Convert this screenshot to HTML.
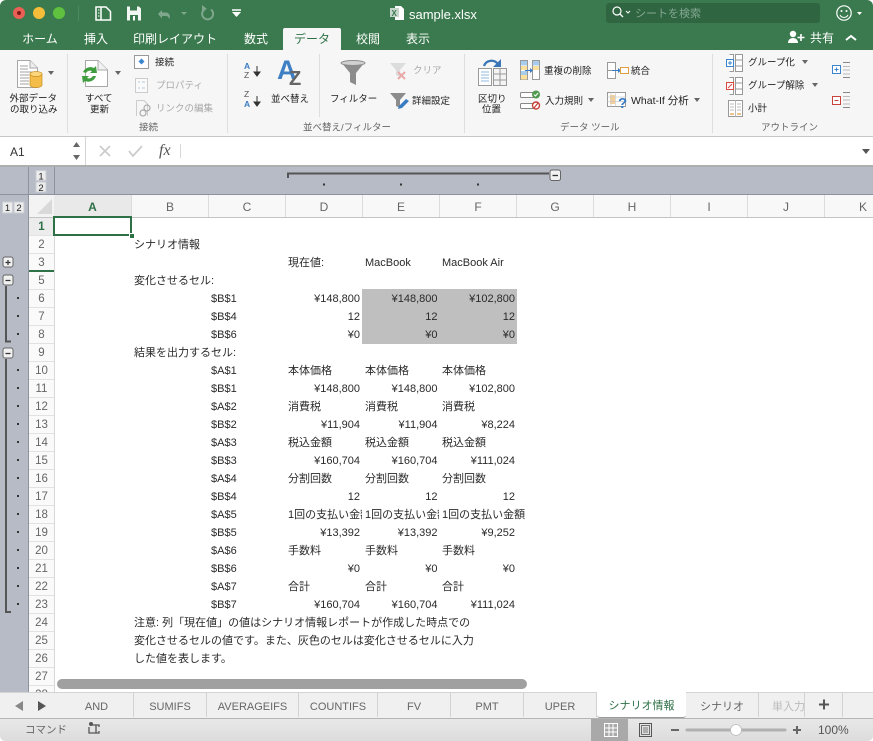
<!DOCTYPE html>
<html lang="ja"><head><meta charset="utf-8"><title>sample.xlsx</title>
<style>
html,body{margin:0;padding:0;background:#fff}
#w{position:relative;width:873px;height:741px;overflow:hidden;background:#fff;font-family:"Liberation Sans","Noto Sans CJK JP",sans-serif;font-size:11px;color:#2a2a2a}
#w>div,.a{position:absolute}
svg{position:absolute;left:0;top:0}
svg text{font-family:"Liberation Sans","Noto Sans CJK JP",sans-serif}
.r{position:absolute;left:0;width:873px;height:18px;line-height:20px;white-space:nowrap}
.r b{font-weight:400;position:absolute;top:0;overflow:hidden}
.B{left:134px}.C{left:211px}.D{left:288px;width:74px}.E{left:365px;width:74px}.F{left:442px}
.dr{left:285px;width:75px;text-align:right}.er{left:362px;width:75.5px;text-align:right}.fr{left:440px;width:75px;text-align:right}
.n{position:absolute;left:29px;width:25px;height:17px;line-height:19px;text-align:center;color:#666;font-size:11.5px;background:#fafafa;border-bottom:1px solid #e2e2e2}
.h{position:absolute;top:195px;height:22px;line-height:25px;text-align:center;color:#666;font-size:12px;background:#f8f8f8;border-right:1px solid #dcdcdc}
.tb{position:absolute;top:692px;height:26px;line-height:28px;text-align:center;color:#666;font-size:11px;border-right:1px solid #d2d2d2;box-sizing:border-box}
.rt{position:absolute;top:28px;height:22px;line-height:23px;color:#fff;font-size:12px;text-align:center}
</style></head><body><div id="w">

<div style="left:0;top:0;width:873px;height:50px;background:#3a7a4e;border-radius:6px 6px 0 0"></div>
<div style="left:606px;top:3px;width:214px;height:20px;background:#2f6541;border-radius:3px"></div>
<div style="left:283px;top:28px;width:58px;height:22px;background:#f6f6f6;border-radius:2px 2px 0 0"></div>
<div class="rt" style="left:14px;width:52px">ホーム</div>
<div class="rt" style="left:76px;width:40px">挿入</div>
<div class="rt" style="left:130px;width:90px">印刷レイアウト</div>
<div class="rt" style="left:236px;width:40px">数式</div>
<div class="rt" style="left:283px;width:58px;color:#2e7147">データ</div>
<div class="rt" style="left:348px;width:40px">校閲</div>
<div class="rt" style="left:398px;width:40px">表示</div>
<div style="left:409px;top:6px;height:18px;line-height:18px;color:#fff;font-size:13px">sample.xlsx</div>
<div style="left:635px;top:4px;height:20px;line-height:20px;color:#84a892;font-size:11px">シートを検索</div>
<div style="left:810px;top:29px;height:18px;line-height:19px;color:#fff;font-size:12px">共有</div>

<div style="left:0;top:50px;width:873px;height:86px;background:#f6f6f6;border-bottom:1px solid #c6c6c6"></div>

<!-- formula bar -->
<div style="left:0;top:137px;width:873px;height:28px;background:#fff;border-bottom:2px solid #aeaeae"></div>
<div style="left:85px;top:137px;width:1px;height:28px;background:#d4d4d4"></div>
<div style="left:180px;top:144px;width:1px;height:14px;background:#d8d8d8"></div>
<div style="left:10px;top:143px;height:18px;line-height:18px;font-size:12px;color:#333">A1</div>
<div style="left:159px;top:142px;height:20px;line-height:20px;font:italic 400 16px 'Liberation Serif',serif;color:#555">fx</div>

<!-- outline bars -->
<div style="left:0;top:167px;width:873px;height:28px;background:#b7bbc6;border-bottom:1px solid #8e929c;box-sizing:border-box"></div>
<div style="left:0;top:195px;width:29px;height:498px;background:#b7bbc6"></div>
<div style="left:29px;top:195px;width:25px;height:22px;background:#f3f3f3"></div>
<div style="left:28px;top:167px;width:1px;height:526px;background:#8e929c"></div>
<div style="left:54px;top:167px;width:1px;height:28px;background:#8e929c"></div>

<!-- column headers -->
<div class="h" style="left:54px;width:77px;color:#2e7147;font-weight:700;background:#e9e9e9">A</div>
<div class="h" style="left:132px;width:76px">B</div>
<div class="h" style="left:209px;width:76px">C</div>
<div class="h" style="left:286px;width:76px">D</div>
<div class="h" style="left:363px;width:76px">E</div>
<div class="h" style="left:440px;width:76px">F</div>
<div class="h" style="left:517px;width:76px">G</div>
<div class="h" style="left:594px;width:76px">H</div>
<div class="h" style="left:671px;width:76px">I</div>
<div class="h" style="left:748px;width:76px">J</div>
<div class="h" style="left:825px;width:76px">K</div>
<div style="left:29px;top:217px;width:844px;height:1px;background:#c4c4c4"></div>

<!-- row numbers -->
<div class="n" style="top:218px;color:#2e7147;font-weight:700;background:#ececec">1</div>
<div class="n" style="top:236px">2</div><div class="n" style="top:254px">3</div>
<div class="n" style="top:272px">5</div><div class="n" style="top:290px">6</div>
<div class="n" style="top:308px">7</div><div class="n" style="top:326px">8</div>
<div class="n" style="top:344px">9</div><div class="n" style="top:362px">10</div>
<div class="n" style="top:380px">11</div><div class="n" style="top:398px">12</div>
<div class="n" style="top:416px">13</div><div class="n" style="top:434px">14</div>
<div class="n" style="top:452px">15</div><div class="n" style="top:470px">16</div>
<div class="n" style="top:488px">17</div><div class="n" style="top:506px">18</div>
<div class="n" style="top:524px">19</div><div class="n" style="top:542px">20</div>
<div class="n" style="top:560px">21</div><div class="n" style="top:578px">22</div>
<div class="n" style="top:596px">23</div><div class="n" style="top:614px">24</div>
<div class="n" style="top:632px">25</div><div class="n" style="top:650px">26</div>
<div class="n" style="top:668px">27</div><div class="n" style="top:686px">28</div>
<div style="left:29px;top:270px;width:25px;height:2px;background:#2e7147"></div>
<div style="left:54px;top:218px;width:1px;height:475px;background:#d8d8d8"></div>

<!-- grey fill -->
<div style="left:362px;top:289px;width:155px;height:55px;background:#bfbfbf"></div>

<!-- cells -->
<div class="r" style="top:235px"><b class="B">シナリオ情報</b></div>
<div class="r" style="top:253px"><b class="D">現在値:</b><b class="E">MacBook</b><b class="F">MacBook Air</b></div>
<div class="r" style="top:271px"><b class="B">変化させるセル:</b></div>
<div class="r" style="top:289px"><b class="C">$B$1</b><b class="dr">¥148,800</b><b class="er">¥148,800</b><b class="fr">¥102,800</b></div>
<div class="r" style="top:307px"><b class="C">$B$4</b><b class="dr">12</b><b class="er">12</b><b class="fr">12</b></div>
<div class="r" style="top:325px"><b class="C">$B$6</b><b class="dr">¥0</b><b class="er">¥0</b><b class="fr">¥0</b></div>
<div class="r" style="top:343px"><b class="B">結果を出力するセル:</b></div>
<div class="r" style="top:361px"><b class="C">$A$1</b><b class="D">本体価格</b><b class="E">本体価格</b><b class="F">本体価格</b></div>
<div class="r" style="top:379px"><b class="C">$B$1</b><b class="dr">¥148,800</b><b class="er">¥148,800</b><b class="fr">¥102,800</b></div>
<div class="r" style="top:397px"><b class="C">$A$2</b><b class="D">消費税</b><b class="E">消費税</b><b class="F">消費税</b></div>
<div class="r" style="top:415px"><b class="C">$B$2</b><b class="dr">¥11,904</b><b class="er">¥11,904</b><b class="fr">¥8,224</b></div>
<div class="r" style="top:433px"><b class="C">$A$3</b><b class="D">税込金額</b><b class="E">税込金額</b><b class="F">税込金額</b></div>
<div class="r" style="top:451px"><b class="C">$B$3</b><b class="dr">¥160,704</b><b class="er">¥160,704</b><b class="fr">¥111,024</b></div>
<div class="r" style="top:469px"><b class="C">$A$4</b><b class="D">分割回数</b><b class="E">分割回数</b><b class="F">分割回数</b></div>
<div class="r" style="top:487px"><b class="C">$B$4</b><b class="dr">12</b><b class="er">12</b><b class="fr">12</b></div>
<div class="r" style="top:505px"><b class="C">$A$5</b><b class="D">1回の支払い金額</b><b class="E">1回の支払い金額</b><b class="F">1回の支払い金額</b></div>
<div class="r" style="top:523px"><b class="C">$B$5</b><b class="dr">¥13,392</b><b class="er">¥13,392</b><b class="fr">¥9,252</b></div>
<div class="r" style="top:541px"><b class="C">$A$6</b><b class="D">手数料</b><b class="E">手数料</b><b class="F">手数料</b></div>
<div class="r" style="top:559px"><b class="C">$B$6</b><b class="dr">¥0</b><b class="er">¥0</b><b class="fr">¥0</b></div>
<div class="r" style="top:577px"><b class="C">$A$7</b><b class="D">合計</b><b class="E">合計</b><b class="F">合計</b></div>
<div class="r" style="top:595px"><b class="C">$B$7</b><b class="dr">¥160,704</b><b class="er">¥160,704</b><b class="fr">¥111,024</b></div>
<div class="r" style="top:613px"><b class="B">注意: 列「現在値」の値はシナリオ情報レポートが作成した時点での</b></div>
<div class="r" style="top:631px"><b class="B">変化させるセルの値です。また、灰色のセルは変化させるセルに入力</b></div>
<div class="r" style="top:649px"><b class="B">した値を表します。</b></div>

<!-- selection -->
<div style="left:53px;top:216px;width:79px;height:20px;border:2px solid #2e7147;box-sizing:border-box"></div>
<div style="left:129px;top:233px;width:6px;height:6px;background:#2e7147;border:1px solid #fff;box-sizing:border-box"></div>

<!-- scrollbar -->
<div style="left:57px;top:679px;width:470px;height:10px;background:#a0a0a0;border-radius:5px"></div>

<!-- tabs -->
<div style="left:0;top:692px;width:873px;height:27px;background:#f0f0f0;border-top:1px solid #d4d4d4;border-bottom:1px solid #b4b4b4;box-sizing:border-box"></div>
<div class="tb" style="left:60px;width:74px;top:693px;height:24px">AND</div>
<div class="tb" style="left:134px;width:73px;top:693px;height:24px">SUMIFS</div>
<div class="tb" style="left:207px;width:92px;top:693px;height:24px">AVERAGEIFS</div>
<div class="tb" style="left:299px;width:79px;top:693px;height:24px">COUNTIFS</div>
<div class="tb" style="left:378px;width:73px;top:693px;height:24px">FV</div>
<div class="tb" style="left:451px;width:73px;top:693px;height:24px">PMT</div>
<div class="tb" style="left:524px;width:73px;top:693px;height:24px">UPER</div>
<div class="tb" style="left:597px;width:89px;top:692px;height:26px;background:#fff;color:#2e7147;border:0;border-bottom:1px solid #999;border-radius:0 0 3px 3px;line-height:28px">シナリオ情報</div>
<div class="tb" style="left:686px;width:73px;top:693px;height:24px">シナリオ</div>
<div class="tb" style="left:759px;width:46px;top:693px;height:24px;color:#bbb;overflow:hidden;text-align:left;padding-left:13px;white-space:nowrap">単入力</div>
<div class="tb" style="left:805px;width:38px;top:693px;height:24px"></div>

<!-- status -->
<div style="left:0;top:719px;width:873px;height:22px;background:linear-gradient(#e8e8e8,#dcdcdc);border-radius:0 0 5px 5px"></div>
<div style="left:25px;top:720px;height:21px;line-height:21px;font-size:10.5px;color:#666">コマンド</div>
<div style="left:591px;top:719px;width:37px;height:22px;background:#a9a9a9"></div>
<div style="left:818px;top:720px;height:21px;line-height:21px;font-size:12px;color:#555">100%</div>

<svg width="873" height="741" viewBox="0 0 873 741">
<!-- traffic lights -->
<circle cx="19" cy="13" r="6" fill="#ec5f56"/><circle cx="19" cy="13" r="2" fill="#7c1a14"/>
<circle cx="39" cy="13" r="6" fill="#f5bd3a"/><circle cx="59" cy="13" r="6" fill="#5fc13f"/>
<path d="M78.500 6V21" stroke="#4c8a60"/>
<!-- sidebar/file -->
<path d="M96 7H106L110.500 11.500V20H96Z M101 7V20" fill="none" stroke="#fff" stroke-width="1.500"/>
<path d="M98 10h1.500M98 13h1.500M98 16h1.500" stroke="#fff"/>
<!-- save -->
<path d="M127 6.500H139L141 8.500V20.500H127Z" fill="#f3f7f4"/><rect x="130" y="6.500" width="7" height="4" fill="#3a7a4e"/><rect x="130" y="15" width="8" height="5.500" fill="#3a7a4e"/><rect x="133" y="16" width="2" height="4.500" fill="#fff"/>
<!-- undo -->
<path d="M158 14l4-4v2.500h4a4 4 0 0 1 3 6.500a3 3 0 0 0-3-3h-4v2.500z" fill="#7fa78d"/><path d="M181 12l3 3 3-3z" fill="#7fa78d"/>
<path d="M211 9.500a5.500 5.500 0 1 1-6-.5" fill="none" stroke="#7fa78d" stroke-width="2"/><path d="M202 5v6l5-2z" fill="#7fa78d"/>
<path d="M232 10h9" stroke="#fff" stroke-width="1.500"/><path d="M232 12h9l-4.500 5z" fill="#fff"/>
<!-- xlsx icon -->
<path d="M395 6h6l3 3v11h-9z" fill="#fff"/><rect x="390" y="8" width="9" height="9" fill="#c6d6cb"/><text x="391.500" y="16" font-size="8" font-weight="700" fill="#3a7a4e">X</text>
<!-- search -->
<circle cx="617" cy="11" r="4" fill="none" stroke="#fff" stroke-width="1.200"/><path d="M620 14l3 3" stroke="#fff" stroke-width="1.300"/><path d="M626 11l2 2 2-2" fill="none" stroke="#fff"/>
<!-- smile -->
<circle cx="844" cy="13" r="7.200" fill="none" stroke="#fff" stroke-width="1.200"/><circle cx="841.500" cy="11" r="1" fill="#fff"/><circle cx="846.500" cy="11" r="1" fill="#fff"/><path d="M840 15a4.500 4.500 0 0 0 8 0" fill="none" stroke="#fff"/>
<path d="M857 12h5l-2.500 3z" fill="#fff"/>
<!-- share -->
<circle cx="793" cy="34" r="3.200" fill="#fff"/><path d="M788 43c0-3 2-5 5-5s5 2 5 5z" fill="#fff"/><path d="M801 34v7M797.500 37.500h7" stroke="#fff" stroke-width="1.600"/>
<path d="M846 40l5-4 5 4" fill="none" stroke="#fff" stroke-width="2"/>

<!-- ribbon separators -->
<path d="M67.500 54V133M227.500 54V133M319.500 54V117M464.500 54V133M712.500 54V133" stroke="#dedede"/>

<!-- external data -->
<path d="M17.500 60.500H30L37.500 68V87.500H17.500Z" fill="#fff" stroke="#a8a8a8"/><path d="M30 60.500V68H37.500" fill="#eee" stroke="#a8a8a8"/>
<path d="M20 66h8M20 69h8M20 72h14M20 75h9M20 78h9M20 81h9M20 84h9" stroke="#a0a0a0"/>
<path d="M30 74v11a6 2.500 0 0 0 12 0v-11z" fill="#f4bd4a" stroke="#c78f1e" stroke-width=".7"/><ellipse cx="36" cy="74" rx="6" ry="2.500" fill="#fbd67c" stroke="#c78f1e" stroke-width=".7"/>
<path d="M48 71h6l-3 4z" fill="#666"/>
<!-- refresh -->
<path d="M85.500 60.500H98L107.500 70V86.500H85.500Z" fill="#fff" stroke="#a8a8a8"/><path d="M98 60.500V70H107.500" fill="#f2f2f2" stroke="#a8a8a8"/>
<path d="M83 72a8 8 0 0 1 11-4l2-2 1 7h-7l2-2a5 5 0 0 0-6 2z" fill="#3f9c3f"/><path d="M96 76a8 8 0 0 1-11 5l-2 2-1-7h7l-2 2a5 5 0 0 0 6-2z" fill="#3f9c3f"/>
<path d="M115 71h6l-3 4z" fill="#666"/>
<!-- connections -->
<rect x="134.500" y="55.500" width="14" height="13" fill="#fff" stroke="#999"/><path d="M141.500 58.500l3 3-3 3-3-3z" fill="#3a85d0"/>
<rect x="135.500" y="78.500" width="12" height="14" fill="#fafafa" stroke="#ccc"/><path d="M138 82h2M142 82h3M138 88h2M142 88h3" stroke="#b8c8d8"/>
<path d="M136.500 100.500H144L147.500 104V116" fill="none" stroke="#ccc"/><path d="M136.500 100.500V116" stroke="#ccc"/><circle cx="143" cy="113" r="3" fill="none" stroke="#aaa" stroke-width="1.200"/><circle cx="147" cy="108" r="3" fill="none" stroke="#aaa" stroke-width="1.200"/>
<!-- sort -->
<g font-size="8.500"><text x="244" y="69" fill="#3a7cc4" font-weight="700">A</text><text x="244" y="78" fill="#555">Z</text>
<text x="244" y="97" fill="#555">Z</text><text x="244" y="107" fill="#3a7cc4" font-weight="700">A</text></g>
<path d="M257 66v7M254 72l3 4 3-4z" stroke="#333" fill="#333"/><path d="M257 96v7M254 102l3 4 3-4z" stroke="#333" fill="#333"/>
<text x="277" y="79" font-size="27" font-weight="700" fill="#3f7fc4">A</text><text x="289" y="85" font-size="20" font-weight="700" fill="#666">Z</text>
<!-- funnel -->
<path d="M341 62h24l-9 11v12l-6-3v-9z" fill="#8c8c8c"/><ellipse cx="353" cy="63" rx="12" ry="2.500" fill="#d0d0d0" stroke="#8c8c8c"/>
<path d="M390 63h16l-6 7v7l-4-2v-5z" fill="#dcdcdc"/><path d="M398 72l7 7M405 72l-7 7" stroke="#e8aaa6" stroke-width="2"/>
<path d="M390 93h16l-6 7v8l-4-2v-6z" fill="#8c8c8c"/><path d="M399 106l7-7 3 2-7 7-4 1z" fill="#3a7cc4"/>
<!-- text to columns -->
<path d="M484 66c2-6 10-7 14-2" fill="none" stroke="#3a75b8" stroke-width="2.200"/><path d="M501 59v8h-8z" fill="#3a75b8"/>
<rect x="478.500" y="68.500" width="13" height="17" fill="#fff" stroke="#999"/><path d="M481 72h8M481 75h8M481 78h8M481 81h8" stroke="#8fb8dc"/>
<rect x="493.500" y="68.500" width="13" height="17" fill="#f4f4f4" stroke="#999"/><path d="M500 68.500V85.500M493.500 74h13M493.500 80h13" stroke="#999"/>
<!-- remove dup -->
<rect x="520.500" y="60.500" width="7" height="19" fill="#fff" stroke="#999"/><rect x="521" y="61" width="6" height="4.500" fill="#a8cdec"/><rect x="521" y="66" width="6" height="4" fill="#fbdf9c"/><rect x="521" y="71" width="6" height="4" fill="#a8cdec"/><rect x="521" y="75" width="6" height="4.500" fill="#fbdf9c"/>
<rect x="532.500" y="60.500" width="7" height="19" fill="#fff" stroke="#999"/><rect x="533" y="61" width="6" height="4.500" fill="#a8cdec"/><rect x="533" y="66" width="6" height="4" fill="#fbdf9c"/>
<path d="M525 70.500h6" stroke="#3a7cc4"/><path d="M530 68l3 2.500-3 2.500z" fill="#3a7cc4"/>
<!-- consolidate -->
<rect x="607.500" y="62.500" width="8" height="16" fill="#fff" stroke="#999"/><path d="M607.500 70.500h8" stroke="#999"/><path d="M612 70.500h7" stroke="#3a7cc4"/><path d="M618 68l3 2.500-3 2.500z" fill="#3a7cc4"/><rect x="620.500" y="67.500" width="8" height="6" fill="#fff" stroke="#e0a040"/>
<!-- validation -->
<rect x="520.500" y="92.500" width="15" height="5" rx="1" fill="#fff" stroke="#888"/><rect x="520.500" y="103.500" width="15" height="5" rx="1" fill="#fff" stroke="#888"/>
<circle cx="536" cy="94.500" r="4" fill="#4f9a4f"/><path d="M534 94.500l1.500 1.500 2.500-3" fill="none" stroke="#fff"/>
<circle cx="536" cy="105.500" r="3.500" fill="#fff" stroke="#c8413a" stroke-width="1.400"/><path d="M534 108l4-5" stroke="#c8413a" stroke-width="1.200"/>
<!-- what-if -->
<rect x="607.500" y="92.500" width="18" height="14" fill="#fff" stroke="#999"/><rect x="610" y="95" width="5" height="9" fill="#f5cf94"/><path d="M607.500 97h18M607.500 101.500h18M611 92.500v14M615.500 92.500v14" stroke="#ccc" stroke-width=".7"/>
<text x="618" y="108" font-size="15" font-weight="700" fill="#3a7cc4">?</text>
<!-- group -->
<path d="M729.500 54.500h4v17h-4M735.500 54.500h7v17h-7ZM735.500 60h7M735.500 66h7" fill="#fff" stroke="#999"/><rect x="726.500" y="59.500" width="7" height="7" fill="#fff" stroke="#3a85d0"/><path d="M728 63h4M730 61v4" stroke="#3a85d0"/>
<path d="M729.500 77.500h4v17h-4M735.500 77.500h7v17h-7ZM735.500 83h7M735.500 89h7" fill="#fff" stroke="#999"/><rect x="726.500" y="82.500" width="7" height="7" fill="#fff" stroke="#d8493f"/><path d="M728 88l4-4" stroke="#d8493f"/>
<rect x="728.500" y="100.500" width="14" height="16" fill="#fff" stroke="#999"/><path d="M735.500 100.500v16M730 104h4M730 107h4M730 110h4M737 104h4M737 107h4M737 110h4" stroke="#bbb"/><path d="M730 114h4M737 114h4" stroke="#e0a040" stroke-width="1.300"/>
<!-- show/hide detail -->
<rect x="832.500" y="65.500" width="8" height="8" fill="#fff" stroke="#3a85d0"/><path d="M834.500 69.500h4M836.500 67.500v4" stroke="#3a85d0"/>
<path d="M843 62.500h7M843 77.500h7" stroke="#888"/><path d="M843 66.500h7M843 70h7M843 74h7" stroke="#bbb"/>
<rect x="832.500" y="96.500" width="8" height="8" fill="#fff" stroke="#c8413a"/><path d="M834.500 100.500h4" stroke="#c8413a"/>
<path d="M843 92.500h7M843 107.500h7" stroke="#888"/><path d="M843 96.500h7M843 100h7M843 104h7" stroke="#bbb"/>
<!-- dropdown arrows -->
<path d="M588 98h6l-3 4zM694 98h6l-3 4zM802 60h6l-3 4zM812 83h6l-3 4z" fill="#666"/>

<g font-size="9.500" fill="#222">
<text x="9.500" y="101.500">外部データ</text><text x="10" y="112.500">の取り込み</text>
<text x="85" y="101.500">すべて</text><text x="90" y="112.500">更新</text>
<text x="155" y="65.500">接続</text>
<text x="271" y="102">並べ替え</text>
<text x="330" y="102">フィルター</text>
<text x="412" y="104">詳細設定</text>
<text x="478" y="102">区切り</text><text x="482" y="112.500">位置</text>
<text x="544" y="74">重複の削除</text><text x="631" y="74">統合</text>
<text x="545" y="104">入力規則</text><text x="631" y="104" font-size="10.500">What-If 分析</text>
<text x="748" y="65.500">グループ化</text><text x="748" y="88.500">グループ解除</text><text x="748" y="111.500">小計</text>
</g>
<g font-size="9.500" fill="#aaa">
<text x="156" y="88.500">プロパティ</text><text x="156" y="111.500">リンクの編集</text><text x="413" y="73.500">クリア</text>
</g>
<g font-size="9.500" fill="#666">
<text x="139" y="130.500">接続</text><text x="303" y="130.500">並べ替え/フィルター</text><text x="560" y="130.500">データ ツール</text><text x="761" y="130.500">アウトライン</text>
</g>

<!-- formula bar icons -->
<path d="M73 147l3.500-5 3.500 5z" fill="#666"/><path d="M73 155l3.500 5 3.500-5z" fill="#666"/>
<path d="M100 146l10 10M110 146l-10 10" stroke="#ccc" stroke-width="1.800"/>
<path d="M129 151l4 5 9-10" fill="none" stroke="#ccc" stroke-width="1.800"/>
<path d="M862 149h8l-4 5z" fill="#555"/>

<!-- outline level buttons -->
<g fill="#ececec" stroke="#c9ccd4"><rect x="36" y="170.500" width="10" height="10"/><rect x="36" y="182" width="10" height="10"/><rect x="2.500" y="202" width="10" height="11"/><rect x="14" y="202" width="10" height="11"/></g>
<g font-size="9.500" fill="#222" text-anchor="middle"><text x="41" y="179.500">1</text><text x="41" y="191">2</text><text x="7.500" y="211">1</text><text x="19" y="211">2</text></g>
<path d="M52 199V214H37Z" fill="#d9d9d9"/>

<!-- column outline -->
<path d="M288 178V173.500H549" fill="none" stroke="#555" stroke-width="2"/>
<rect x="550" y="170" width="10.500" height="10.500" rx="2" fill="#f1f1f1" stroke="#666"/><path d="M552.500 175.500h5.500" stroke="#333" stroke-width="1.300"/>
<path d="M323 183.500h2v2h-2zM400 183.500h2v2h-2zM477 183.500h2v2h-2z" fill="#333"/>

<!-- row outline -->
<g fill="#f1f1f1" stroke="#666"><rect x="3" y="257" width="10" height="10" rx="2"/><rect x="3" y="275" width="10" height="10" rx="2"/><rect x="3" y="348" width="10" height="10" rx="2"/></g>
<path d="M5.500 262.500h5M8 260v5M5.500 280.500h5M5.500 353.500h5" stroke="#333" stroke-width="1.200"/>
<path d="M6 286V341.500H11M6 359V612H11" fill="none" stroke="#555" stroke-width="2"/>
<path d="M17 297h2v2h-2zM17 315h2v2h-2zM17 333h2v2h-2zM17 369h2v2h-2zM17 387h2v2h-2zM17 405h2v2h-2zM17 423h2v2h-2zM17 441h2v2h-2zM17 459h2v2h-2zM17 477h2v2h-2zM17 495h2v2h-2zM17 513h2v2h-2zM17 531h2v2h-2zM17 549h2v2h-2zM17 567h2v2h-2zM17 585h2v2h-2zM17 603h2v2h-2z" fill="#333"/>

<!-- tab arrows -->
<path d="M23 701v10l-8-5z" fill="#888"/><path d="M38 701v10l8-5z" fill="#555"/>
<path d="M819 704.500h10M824 699.500v10" stroke="#555" stroke-width="2"/>

<!-- status icons -->
<circle cx="91" cy="724" r="2" fill="#555"/><path d="M89 727v6h10v-2M91 725h8v2M96 725v8" fill="none" stroke="#555" stroke-width="1.300"/>
<path d="M604.500 723.500h13v13h-13zM604.500 728h13M604.500 732h13M609 723.500v13M613 723.500v13" fill="none" stroke="#fff"/>
<rect x="639.500" y="723.500" width="12" height="13" fill="none" stroke="#555"/><rect x="641.500" y="725.500" width="8" height="9" fill="none" stroke="#555" stroke-width=".8"/><path d="M643 728h5M643 730h5M643 732h5" stroke="#555" stroke-width=".7"/>
<path d="M671 730h8" stroke="#666" stroke-width="2"/>
<path d="M687 730H785" stroke="#b0b0b0" stroke-width="3" stroke-linecap="round"/>
<circle cx="736" cy="730" r="5.500" fill="#fff" stroke="#bbb" stroke-width=".8"/>
<path d="M793 730h8M797 726v8" stroke="#666" stroke-width="2"/>
</svg>
</div></body></html>
